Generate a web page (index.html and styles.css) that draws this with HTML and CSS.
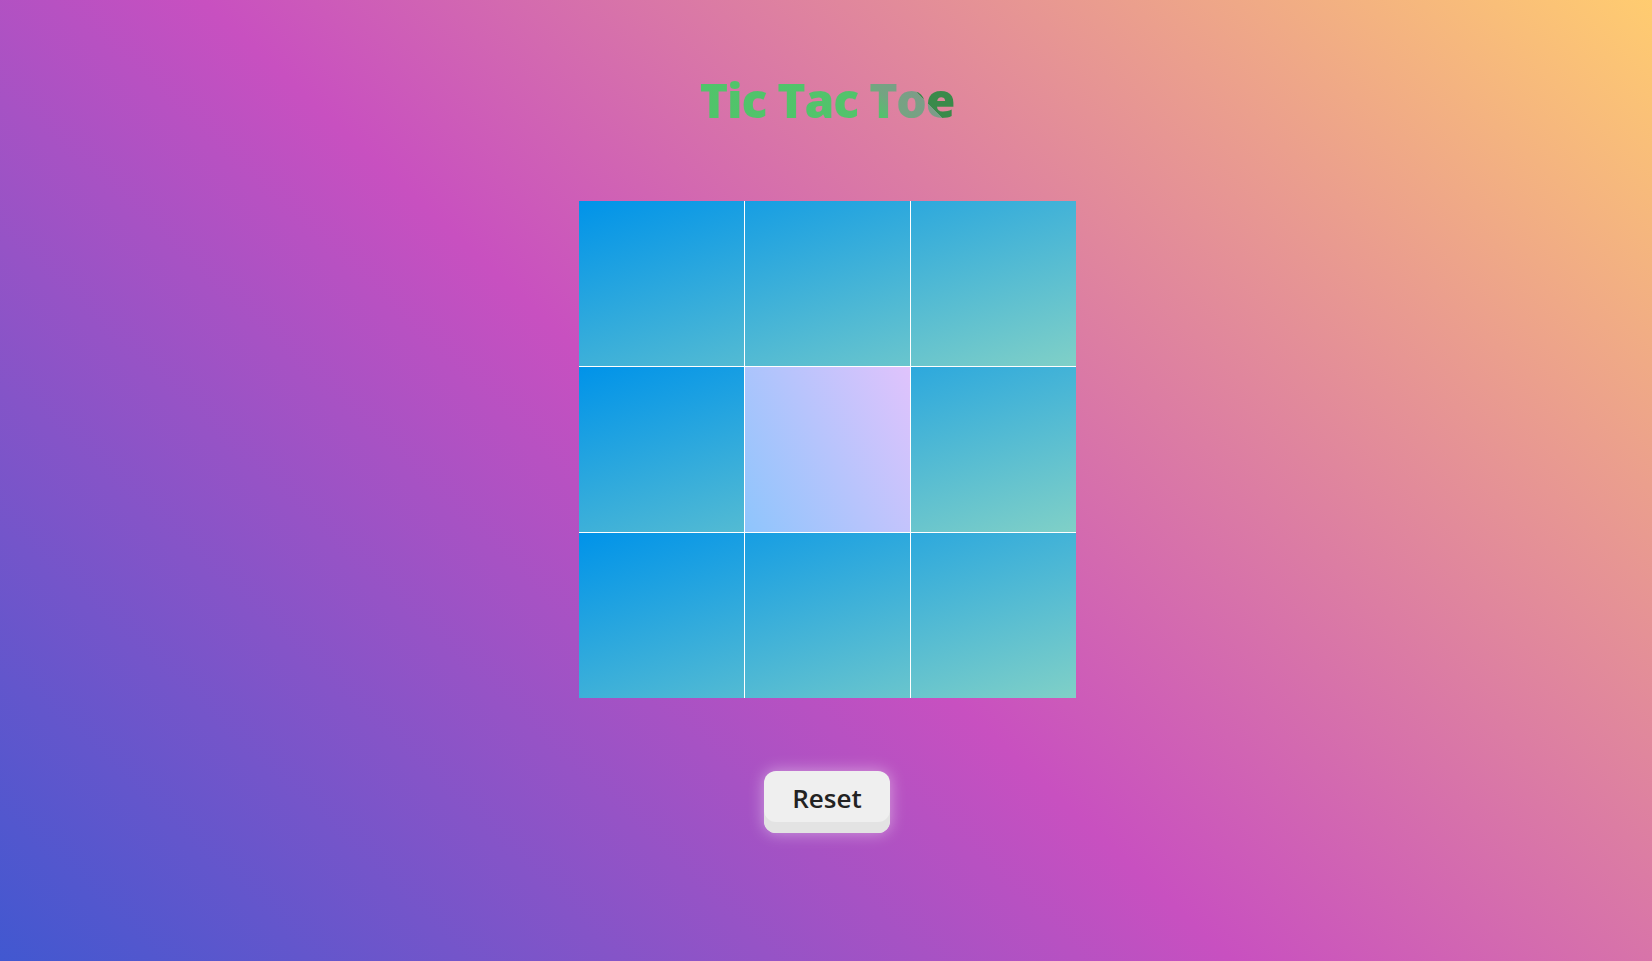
FILE: index.html
```html
<!DOCTYPE html>
<html lang="en">
<head>
<meta charset="utf-8">
<title>Tic Tac Toe</title>
<link rel="stylesheet" href="styles.css">
</head>
<body>
<main class="game">
  <h1 class="title">Tic Tac Toe</h1>
  <div class="board">
    <div class="row">
      <div class="cell"></div>
      <div class="cell"></div>
      <div class="cell"></div>
    </div>
    <div class="row">
      <div class="cell"></div>
      <div class="cell cell--hover"></div>
      <div class="cell"></div>
    </div>
    <div class="row">
      <div class="cell"></div>
      <div class="cell"></div>
      <div class="cell"></div>
    </div>
  </div>
  <button class="reset" type="button">Reset</button>
</main>
</body>
</html>
```

FILE: styles.css
```css
html, body {
  margin: 0;
  padding: 0;
  height: 100%;
}

body {
  min-height: 100vh;
  background: linear-gradient(43deg, #4158D0 0%, #C850C0 46%, #FFCC70 100%);
  font-family: "Open Sans", "Noto Sans", sans-serif;
}

.game {
  display: flex;
  flex-direction: column;
  align-items: center;
  padding-top: 72px;
  padding-left: 2px;
}

.title {
  margin: 0 0 73px;
  font-size: 48px;
  line-height: 56px;
  font-weight: 800;
  letter-spacing: -1.2px;
  display: inline-block;
  background: linear-gradient(45deg, #50c46a 0%, #52c36b 62%, #74a482 70%, #7d9c88 81.3%, #3a8a4a 81.6%, #3a8a4a 100%);
  -webkit-background-clip: text;
  background-clip: text;
  color: transparent;
  -webkit-text-fill-color: transparent;
}

.board {
  display: flex;
  flex-direction: column;
  width: 497px;
}

.row {
  display: flex;
  height: 165px;
  background: linear-gradient(160deg, #0093E9 0%, #80D0C7 100%);
}

.row + .row {
  border-top: 1px solid #ffffff;
}

.cell {
  width: 165px;
  height: 165px;
}

.cell + .cell {
  border-left: 1px solid #ffffff;
}

.cell--hover {
  background: linear-gradient(62deg, #8EC5FC 0%, #E0C3FC 100%);
}

.reset {
  margin-top: 73px;
  box-sizing: border-box;
  height: 62px;
  padding: 9px 28px 17px;
  border: none;
  border-radius: 12px;
  background: #efefef;
  color: #222222;
  font-family: "Open Sans", "Noto Sans", sans-serif;
  font-size: 26px;
  line-height: 36px;
  font-weight: 600;
  box-shadow: 0 0 16px rgba(255, 255, 255, 0.45), inset 0 -11px 0 #e3e3e3;
  cursor: pointer;
}
```
